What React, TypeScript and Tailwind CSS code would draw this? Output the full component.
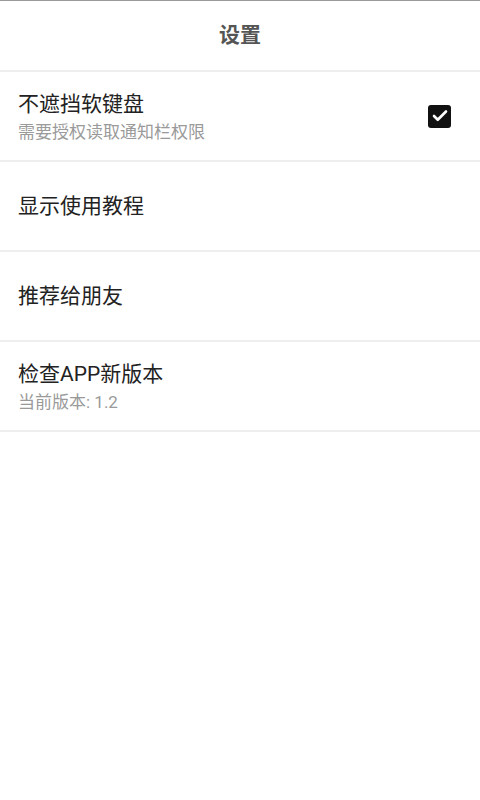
import { Check } from "lucide-react";

type Item = { title: string; sub?: string; checked?: boolean };

const items: Item[] = [
  { title: "不遮挡软键盘", sub: "需要授权读取通知栏权限", checked: true },
  { title: "显示使用教程" },
  { title: "推荐给朋友" },
  { title: "检查APP新版本", sub: "当前版本: 1.2" },
];

export default function App() {
  return (
    <div
      className="min-h-[800px] w-[480px] bg-white border-t border-[#9a9a9a]"
      style={{ fontFamily: 'Roboto, "Noto Sans CJK SC", "Noto Sans", sans-serif' }}
    >
      <header className="flex h-[69px] items-center justify-center">
        <h1 className="text-[21px] font-semibold text-[#555555]">设置</h1>
      </header>

      <ul className="border-t-2 border-[#eeeeee]">
        {items.map((item) => (
          <li key={item.title} className="flex h-[90px] items-center border-b-2 border-[#eeeeee] pl-[18px] pr-[29px]">
            <div className="flex-1">
              <p className="text-[21px] leading-[28px] text-[#222222]">{item.title}</p>
              {item.sub && <p className="mt-[3px] text-[17px] leading-[22px] text-[#9a9a9a]">{item.sub}</p>}
            </div>
            {item.checked && (
              <span className="flex h-[23px] w-[23px] items-center justify-center rounded-[3px] bg-[#111111]">
                <Check className="h-[18px] w-[18px] text-white" strokeWidth={3.5} />
              </span>
            )}
          </li>
        ))}
      </ul>
    </div>
  );
}
